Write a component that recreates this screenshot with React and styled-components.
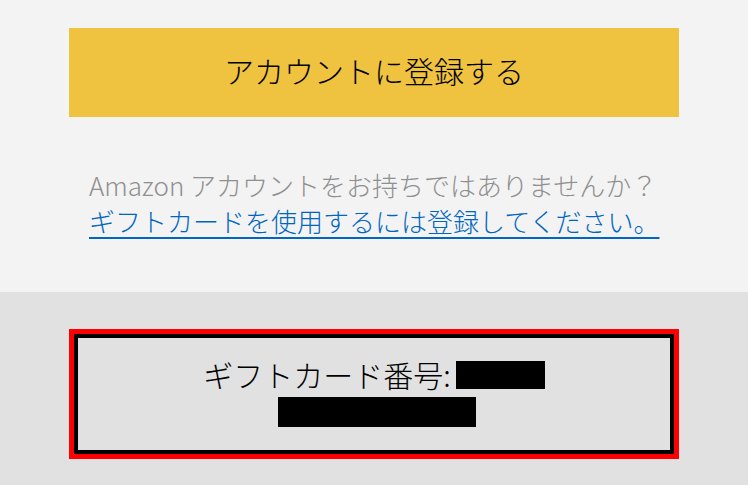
import React from "react";
import styled, { createGlobalStyle } from "styled-components";

const GlobalStyle = createGlobalStyle`
  html, body {
    margin: 0;
    padding: 0;
    background: #e1e1e1;
  }
  body {
    font-family: "Noto Sans CJK JP", "Noto Sans", sans-serif;
    font-weight: 300;
  }
`;

const Page = styled.div`
  width: 748px;
  height: 485px;
  overflow: hidden;
  display: flex;
  flex-direction: column;
`;

const TopSection = styled.section`
  background: #f3f3f3;
  height: 292px;
  box-sizing: border-box;
  padding: 28px 69px 0;
`;

const RegisterButton = styled.button`
  display: flex;
  align-items: center;
  justify-content: center;
  width: 100%;
  height: 89px;
  border: none;
  background: #efc23f;
  color: #000;
  font-family: inherit;
  font-weight: inherit;
  font-size: 30px;
  padding: 0 0 6px;
  box-sizing: border-box;
  cursor: pointer;
`;

const Info = styled.div`
  margin-top: 50px;
  padding-left: 20px;
  font-size: 26px;
  line-height: 36px;
`;

const Muted = styled.p`
  margin: 0;
  color: #8f8f8f;
`;

const Link = styled.a`
  color: #0066c0;
  text-decoration: underline;
  text-underline-offset: 5px;
  text-decoration-thickness: 2px;
`;

const BottomSection = styled.section`
  flex: 1;
  background: #e1e1e1;
  padding: 37px 69px 0;
`;

const CardFrame = styled.div`
  border: 5px solid #ff0000;
`;

const CardBox = styled.div`
  border: 4px solid #000;
  height: 120px;
  box-sizing: border-box;
  display: flex;
  flex-direction: column;
  align-items: center;
  padding-top: 18px;
  font-size: 30px;
  line-height: 37px;
  color: #000;
`;

const Row = styled.div`
  display: flex;
  align-items: center;
  height: 37px;
`;

const Redacted = styled.span`
  display: inline-block;
  background: #000;
  width: ${p => p.w}px;
  height: ${p => p.h}px;
  margin-left: ${p => p.ml || 0}px;
`;

export default function App() {
  return (
    <Page>
      <GlobalStyle />
      <TopSection>
        <RegisterButton>アカウントに登録する</RegisterButton>
        <Info>
          <Muted>Amazon アカウントをお持ちではありませんか？</Muted>
          <Link href="#">ギフトカードを使用するには登録してください。 </Link>
        </Info>
      </TopSection>
      <BottomSection>
        <CardFrame>
          <CardBox>
            <Row>
              ギフトカード番号:
              <Redacted w={89} h={28} ml={5} />
            </Row>
            <Row>
              <Redacted w={198} h={30} ml={6} />
            </Row>
          </CardBox>
        </CardFrame>
      </BottomSection>
    </Page>
  );
}
